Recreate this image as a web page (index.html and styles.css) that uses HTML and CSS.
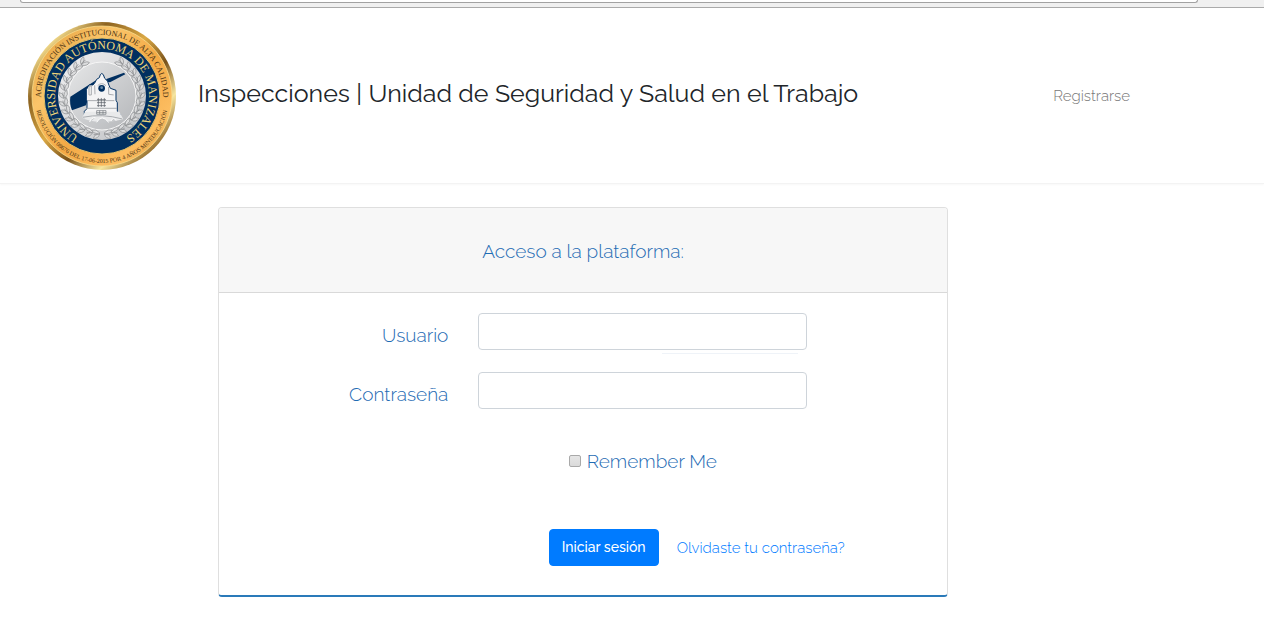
FILE: index.html
```html
<!DOCTYPE html>
<html lang="es">
<head>
<meta charset="utf-8">
<meta name="viewport" content="width=device-width, initial-scale=1">
<title>Inspecciones</title>
<link rel="stylesheet" href="styles.css">
</head>
<body>
<div class="topbar"><div class="topbar-field"></div></div>
<header class="navbar">
  <a class="brand" href="#">
    <svg class="seal" viewBox="-75 -75 150 150" role="img" aria-label="Universidad Autónoma de Manizales">
      <defs>
        <linearGradient id="rim" x1="0" y1="0" x2="1" y2="1">
          <stop offset="0" stop-color="#8a6420"/><stop offset=".14" stop-color="#f4dc8c"/><stop offset=".27" stop-color="#8d6320"/><stop offset=".45" stop-color="#dba945"/><stop offset=".6" stop-color="#79521b"/><stop offset=".74" stop-color="#f6e6a0"/><stop offset=".87" stop-color="#8b6222"/><stop offset="1" stop-color="#e8c66c"/>
        </linearGradient>
        <linearGradient id="gold" x1="0" y1="0" x2="1" y2="1">
          <stop offset="0" stop-color="#e09a35"/><stop offset=".3" stop-color="#fbc56a"/><stop offset=".55" stop-color="#f3a945"/><stop offset=".8" stop-color="#fdbe62"/><stop offset="1" stop-color="#d98f2c"/>
        </linearGradient>
        <linearGradient id="silver" x1="0" y1="0" x2="1" y2="1">
          <stop offset="0" stop-color="#f1f1f2"/><stop offset="1" stop-color="#bfc1c4"/>
        </linearGradient>
        <linearGradient id="disc" x1="0" y1="0" x2="1" y2="1">
          <stop offset="0" stop-color="#e6e7e8"/><stop offset="1" stop-color="#b4b6b9"/>
        </linearGradient>
        <path id="arc-top" d="M0 61A61 61 0 0 1 0-61A61 61 0 0 1 0 61"/>
        <path id="arc-bottom" d="M0-67A67 67 0 0 0 0 67A67 67 0 0 0 0-67"/>
        <path id="arc-name" d="M0 47A47 47 0 0 1 0-47A47 47 0 0 1 0 47"/>
        <g id="leaf" stroke="#86888b" stroke-width=".6" fill="#dcddde">
          <path d="M0-37Q-5-40-5-43Q0-43 1-38Z"/>
          <path d="M0-38Q-6-38-7-35Q-3-33 1-37Z"/>
          <path d="M1-38Q-3-40-5-39" fill="none"/>
        </g>
        <g id="branch">
          <use href="#leaf" transform="rotate(32)"/><use href="#leaf" transform="rotate(44)"/><use href="#leaf" transform="rotate(56)"/><use href="#leaf" transform="rotate(68)"/><use href="#leaf" transform="rotate(80)"/><use href="#leaf" transform="rotate(92)"/><use href="#leaf" transform="rotate(104)"/><use href="#leaf" transform="rotate(116)"/><use href="#leaf" transform="rotate(128)"/><use href="#leaf" transform="rotate(140)"/><use href="#leaf" transform="rotate(152)"/><use href="#leaf" transform="rotate(164)"/><use href="#leaf" transform="rotate(175)"/>
        </g>
      </defs>
      <circle r="74" fill="url(#rim)"/>
      <circle r="70" fill="url(#gold)" stroke="#f8dc8d" stroke-width=".8"/>
      <circle r="58" fill="#002f60" stroke="#e9c46a" stroke-width="1"/>
      <circle r="44" fill="url(#silver)"/>
      <circle r="34" fill="url(#disc)" stroke="#f6f6f6" stroke-width="1"/>
      <use href="#branch"/><use href="#branch" transform="scale(-1 1)"/>
      <g transform="translate(-42 -45.7) scale(.3333)">
        <path d="M31 139L108 90L100 105L82 118V152L78 165L36 180Q28 160 31 139Z" fill="#002f60"/>
        <path d="M133 88L192 67L196 72L150 96L139 94Z" fill="#002f60"/>
        <path d="M121 73Q125 66 130 73L134 84Q145 91 147 105L151 114L168 120V150L172 157V183L181 192V203H73V183L81 175V151L79 147V118L87 104L99 104L105 97Q108 85 118 82Z" fill="#f4f4f5" stroke="#002f60" stroke-width="3"/>
        <path d="M75 184H178L190 207Q158 216 126 214Q91 215 66 202Z" fill="#e9eaeb"/>
        <path d="M87 110L94 106V134H87ZM104 105L105 132M146 110V132L161 134M83 151H163M79 174H171M68 201Q126 189 187 206" fill="none" stroke="#a9acb0" stroke-width="3"/>
        <path d="M89 215Q93 202 106 202M110 216Q125 190 146 216M153 212Q161 198 168 211" fill="#c4c6c9" stroke="#fff" stroke-width="3"/>
        <circle cx="125" cy="114" r="10" fill="#002f60"/><circle cx="125" cy="112" r="4" fill="#668bab"/>
        <path d="M113 106Q125 94 138 106" fill="none" stroke="#abb0b5" stroke-width="3"/>
        <path d="M115 143V170M124 143V170M133 143V170M111 148H138M111 157H138M111 166H138" stroke="#52585f" stroke-width="2"/>
        <path d="M110 181H138V192H110ZM119 181V192M129 181V192M110 187H138" fill="none" stroke="#71767c" stroke-width="2"/>
      </g>
      <text class="seal-top"><textPath href="#arc-top" startOffset="50%">ACREDITACIÓN INSTITUCIONAL DE ALTA CALIDAD</textPath></text>
      <text class="seal-bottom"><textPath href="#arc-bottom" startOffset="50%">RESOLUCIÓN 08676 DEL 17-06-2015 POR 4 AÑOS MINEDUCACIÓN</textPath></text>
      <text class="seal-name"><textPath href="#arc-name" startOffset="50%">UNIVERSIDAD AUTÓNOMA DE MANIZALES</textPath></text>
    </svg>
    <span class="brand-title">Inspecciones | Unidad de Seguridad y Salud en el Trabajo</span>
  </a>
  <nav><a class="nav-link" href="#">Registrarse</a></nav>
</header>
<main class="content">
  <section class="card">
    <h1 class="card-header">Acceso a la plataforma:</h1>
    <form class="card-body">
      <div class="row field">
        <label for="user">Usuario</label>
        <input class="control" id="user" type="text">
      </div>
      <div class="row">
        <label for="password">Contraseña</label>
        <input class="control" id="password" type="password">
      </div>
      <div class="remember">
        <input class="check" id="remember" type="checkbox">
        <label for="remember">Remember Me</label>
      </div>
      <div class="actions">
        <button class="btn" type="button">Iniciar sesión</button>
        <a class="forgot" href="#">Olvidaste tu contraseña?</a>
      </div>
    </form>
  </section>
</main>
</body>
</html>
```
FILE: styles.css
```css
* { box-sizing: border-box; }
body {
  margin: 0;
  background: #fff;
  color: #212529;
  font-family: Raleway, "Open Sans", sans-serif;
  font-size: 15px;
  font-weight: 300;
  line-height: 22px;
}
a { text-decoration: none; }
.topbar {
  height: 8px;
  padding: 0 66px 0 20px;
  background: #f0f0f0;
  border-bottom: 1px solid #aaa;
}
.topbar-field {
  height: 3px;
  background: #fff;
  border: 1px solid #a2a2a2;
  border-top: 0;
  border-radius: 0 0 3px 3px;
}
.navbar {
  display: flex;
  align-items: center;
  justify-content: space-between;
  padding: 13px 134px 12px 27px;
  border-bottom: 1px solid #f3f3f3;
  box-shadow: 0 1px 2px rgba(0, 0, 0, .03);
}
.brand {
  display: flex;
  align-items: center;
  gap: 21px;
  color: #212529;
  font-size: 25px;
  font-weight: 400;
  line-height: 32px;
  white-space: nowrap;
}
.seal { width: 150px; height: 150px; flex: none; }
.seal text { font-family: "Liberation Serif", serif; text-anchor: middle; }
.seal .seal-top { font-size: 8px; fill: #4d3212; }
.seal .seal-bottom { font-size: 6px; fill: #4d3212; }
.seal .seal-name { font-size: 12px; fill: #f0d77a; }
.brand-title { padding-bottom: 6px; }
.nav-link { color: #777; }
.content { padding: 23px 0 38px 218px; }
.card {
  max-width: 730px;
  border: 1px solid #dfdfdf;
  border-bottom: 2px solid #2a7ab9;
  border-radius: 4px;
}
.card-header {
  margin: 0;
  padding: 31px 20px 29px;
  background: #f7f7f7;
  border-bottom: 1px solid #d9d9d9;
  border-radius: 3px 3px 0 0;
  color: #1f6cb4;
  font-size: 19px;
  font-weight: 300;
  line-height: 24px;
  text-align: center;
}
.card-body { padding: 20px 5px 29px; }
.row {
  display: grid;
  grid-template-columns: 4fr 6fr 2fr;
  align-items: center;
  margin-bottom: 22px;
}
.row label, .remember label { color: #1f6cb4; font-size: 19px; line-height: 24px; }
.row label { padding: 6px 15px 0; text-align: right; }
.control {
  height: 37px;
  min-width: 0;
  margin: 0 15px;
  padding: 6px 12px;
  border: 1px solid #ced4da;
  border-radius: 4px;
  background: #fff;
  font: inherit;
}
.field { position: relative; }
.field::after {
  content: "";
  position: absolute;
  top: 40px;
  left: 61%;
  width: 19%;
  height: 1px;
  background: #eff3f8;
}
.remember {
  display: flex;
  align-items: center;
  justify-content: center;
  gap: 6px;
  margin: 40px calc(100% / 6) 0 calc(100% / 3);
}
.check {
  appearance: none;
  width: 12px;
  height: 12px;
  margin: 0;
  border: 1px solid #a9a9a9;
  border-radius: 2px;
  background: linear-gradient(#e6e6e6, #dadada);
}
.check:checked { background: #2a74b8; }
.actions {
  display: flex;
  justify-content: center;
  align-items: center;
  gap: 6px;
  margin: 56px 0 0 calc(100% / 3);
}
.btn {
  padding: 7px 12px;
  border: 1px solid #007bff;
  border-radius: 4px;
  background: #007bff;
  color: #fff;
  font: inherit;
  font-size: 14px;
  font-weight: 500;
  line-height: 21px;
}
.forgot { padding: 0 12px; color: #007bff; }
```
